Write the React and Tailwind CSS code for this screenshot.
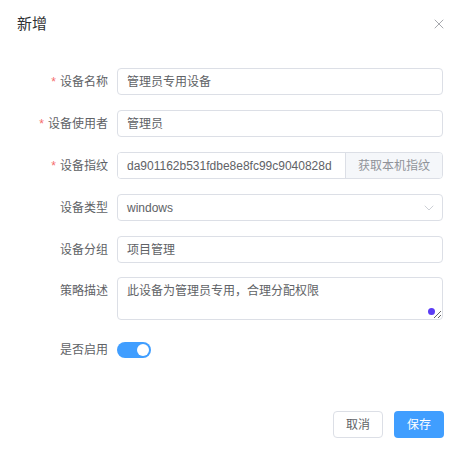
import { ChevronDown, X } from 'lucide-react';

const font = { fontFamily: '"Liberation Sans", "Noto Sans CJK SC", sans-serif' };

function Label({ required, children, top }) {
  return (
    <div className={`w-[108px] shrink-0 flex justify-end h-[27px] items-center text-[12px] text-[#606266] ${top ? 'self-start' : ''}`}>
      {required && <span className="text-[#f56c6c] mr-[4px]">*</span>}
      {children}
    </div>
  );
}

function TextInput({ value }) {
  return (
    <div className="flex-1 h-[27px] flex items-center border border-[#dcdfe6] rounded-[4px] px-[9px] text-[12px] text-[#606266] bg-white">
      {value}
    </div>
  );
}

export default function App() {
  return (
    <div style={font} className="w-[460px] h-[454px] bg-white flex flex-col">
      {/* Header */}
      <div className="flex items-center justify-between pl-[17px] pr-[13px] pt-[15px] h-[33px]">
        <span className="text-[15px] leading-[18px] text-[#303133]">新增</span>
        <X className="w-[16px] h-[16px] text-[#909399]" strokeWidth={1.2} />
      </div>

      {/* Form */}
      <div className="flex flex-col gap-[15px] mt-[35px] pr-[17px]">
        <div className="flex items-center gap-[9px]">
          <Label required>设备名称</Label>
          <TextInput value="管理员专用设备" />
        </div>
        <div className="flex items-center gap-[9px]">
          <Label required>设备使用者</Label>
          <TextInput value="管理员" />
        </div>
        <div className="flex items-center gap-[9px]">
          <Label required>设备指纹</Label>
          <div className="flex-1 h-[27px] flex border border-[#dcdfe6] rounded-[4px] overflow-hidden text-[12px]">
            <div className="flex-1 flex items-center px-[9px] text-[#606266] bg-white">da901162b531fdbe8e8fc99c9040828d</div>
            <div className="w-[97px] flex items-center justify-center bg-[#f5f7fa] border-l border-[#dcdfe6] text-[#909399]">获取本机指纹</div>
          </div>
        </div>
        <div className="flex items-center gap-[9px]">
          <Label>设备类型</Label>
          <div className="flex-1 h-[27px] flex items-center justify-between border border-[#dcdfe6] rounded-[4px] pl-[9px] pr-[5px] text-[12px] text-[#606266]">
            <span>windows</span>
            <ChevronDown className="w-[16px] h-[16px] text-[#c0c4cc]" strokeWidth={1.2} />
          </div>
        </div>
        <div className="flex items-center gap-[9px]">
          <Label>设备分组</Label>
          <TextInput value="项目管理" />
        </div>
        <div className="flex gap-[9px] -mt-[1px]">
          <Label top>策略描述</Label>
          <div className="flex-1 relative">
            <textarea
              readOnly
              defaultValue="此设备为管理员专用，合理分配权限"
              className="block w-full h-[43px] border border-[#dcdfe6] rounded-[4px] px-[9px] py-[4px] text-[12px] leading-[18px] text-[#606266] outline-none resize-y"
            />
            <span className="absolute right-[8px] bottom-[5px] w-[7px] h-[7px] rounded-full bg-[#5b3cf5]" />
          </div>
        </div>
        <div className="flex items-center gap-[9px] mt-[7px]">
          <div className="w-[108px] shrink-0 flex justify-end items-center h-[16px] text-[12px] text-[#606266]">是否启用</div>
          <div className="w-[34px] h-[16px] rounded-full bg-[#409eff] flex items-center justify-end pr-[2px]">
            <span className="w-[12px] h-[12px] rounded-full bg-white" />
          </div>
        </div>
      </div>

      {/* Footer */}
      <div className="flex justify-end gap-[11px] pr-[16px] mt-[53px]">
        <button className="w-[50px] h-[27px] border border-[#dcdfe6] rounded-[4px] text-[12px] text-[#606266] bg-white">取消</button>
        <button className="w-[50px] h-[27px] rounded-[4px] text-[12px] text-white bg-[#409eff]">保存</button>
      </div>
    </div>
  );
}
